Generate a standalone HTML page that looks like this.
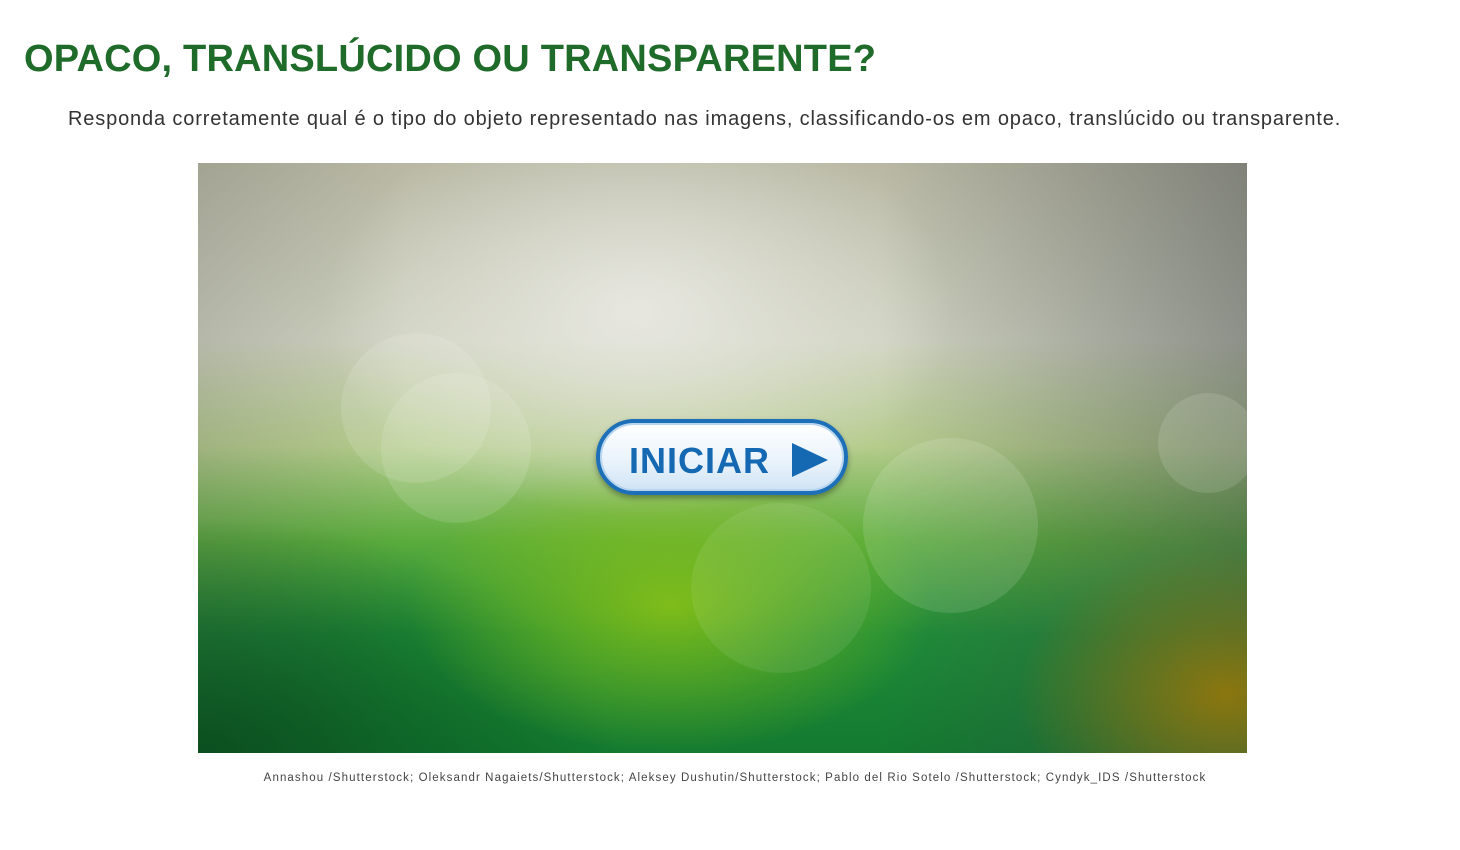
<!DOCTYPE html>
<html><head><meta charset="utf-8"><style>
body{margin:0;background:#fff;width:1460px;height:850px;overflow:hidden;font-family:"Liberation Sans",sans-serif;position:relative}
h1{position:absolute;left:24px;top:38px;margin:0;font-size:38px;font-weight:bold;color:#1f6b2a;letter-spacing:0.2px;white-space:nowrap}
.sub{position:absolute;left:68px;top:108px;font-size:20px;color:#333;white-space:nowrap;letter-spacing:0.85px}
.img{position:absolute;left:198px;top:163px;width:1049px;height:590px;overflow:hidden;
background:
radial-gradient(ellipse 30% 35% at 42% 25%, rgba(232,232,225,0.95) 0, rgba(232,232,225,0) 100%),
radial-gradient(ellipse 20% 25% at 98% 90%, rgba(150,120,10,0.9) 0, rgba(150,120,10,0) 100%),
radial-gradient(ellipse 25% 25% at 45% 75%, rgba(140,195,20,0.85) 0, rgba(140,195,20,0) 100%),
radial-gradient(ellipse 40% 40% at 0% 100%, rgba(5,70,25,0.8) 0, rgba(5,70,25,0) 100%),
linear-gradient(90deg, rgba(80,80,80,0.2) 0%, rgba(0,0,0,0) 20%, rgba(0,0,0,0) 65%, rgba(60,65,70,0.45) 100%),
linear-gradient(180deg,#b8b8a4 0%,#cfd2c0 30%,#b5cc8c 48%,#5aac3c 64%,#1e8c38 80%,#137a30 100%);}
.c{position:absolute;border-radius:50%;background:rgba(255,255,255,0.12)}
.btn{position:absolute;left:596px;top:419px;width:252px;height:76px;border:4px solid #1d6fb8;border-radius:40px;box-sizing:border-box;
background:linear-gradient(180deg,#ffffff 0%,#e8f2fb 60%,#cfe3f5 100%);box-shadow:0 3px 6px rgba(0,0,0,0.35),inset 0 0 0 2px #b9d6f0}
.btn span{position:absolute;left:29px;top:17px;font-size:36px;font-weight:bold;color:#1568b2;letter-spacing:1px}
.btn svg{position:absolute;left:190px;top:18px}
.cap{position:absolute;left:0;width:1470px;text-align:center;top:772px;font-size:11.5px;color:#444;letter-spacing:1.1px}
</style></head><body>
<h1>OPACO, TRANSLÚCIDO OU TRANSPARENTE?</h1>
<div class="sub">Responda corretamente qual é o tipo do objeto representado nas imagens, classificando-os em opaco, translúcido ou transparente.</div>
<div class="img">
<div class="c" style="left:143px;top:170px;width:150px;height:150px"></div>
<div class="c" style="left:183px;top:210px;width:150px;height:150px"></div>
<div class="c" style="left:665px;top:275px;width:175px;height:175px"></div>
<div class="c" style="left:493px;top:340px;width:180px;height:170px;background:rgba(255,255,255,0.08)"></div>
<div class="c" style="left:960px;top:230px;width:100px;height:100px"></div>
</div>
<div class="btn"><span>INICIAR</span><svg width="40" height="38"><polygon points="2,2 38,19 2,36" fill="#1568b2"/></svg></div>
<div class="cap">Annashou /Shutterstock; Oleksandr Nagaiets/Shutterstock; Aleksey Dushutin/Shutterstock; Pablo del Rio Sotelo /Shutterstock; Cyndyk_IDS /Shutterstock</div>
</body></html>
